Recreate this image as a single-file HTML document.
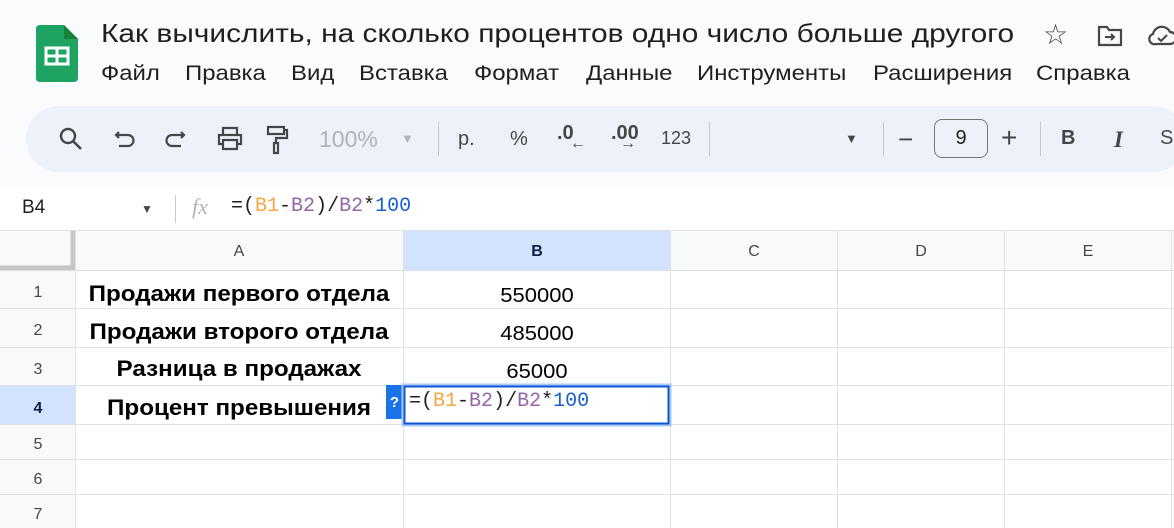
<!DOCTYPE html>
<html><head><meta charset="utf-8"><style>
*{margin:0;padding:0;box-sizing:border-box}
body{width:1174px;height:528px;overflow:hidden;background:#f9fbfd;font-family:"Liberation Sans","DejaVu Sans",sans-serif;position:relative;color:#1f1f1f}
.a{position:absolute;white-space:nowrap}
.title{left:101px;top:18px;font-size:26px;color:#1f1f1f;transform:scaleX(1.15);transform-origin:0 0}
.menu{top:62px;font-size:21px;color:#1f1f1f;transform:scaleX(1.14);transform-origin:0 0}
.tb{left:26px;top:106px;width:1160px;height:66px;background:#edf2fa;border-radius:33px}
.ic{color:#444746;font-size:20px}
.sep{width:1px;height:34px;background:#c7c7c7;top:122px}
.fb{left:0;top:188px;width:1174px;height:42px;background:#fff}
.mono{font-family:"Liberation Mono","DejaVu Sans Mono",monospace}
</style></head><body>
<svg class="a" style="left:36px;top:25px" width="42" height="57" viewBox="0 0 42 57"><path d="M4 0H28L42 14V53Q42 57 38 57H4Q0 57 0 53V4Q0 0 4 0Z" fill="#1ea362"/><path d="M28 0V14H42Z" fill="#188038"/><rect x="10" y="23" width="22" height="16" fill="none" stroke="#fff" stroke-width="3"/><line x1="10" y1="31" x2="32" y2="31" stroke="#fff" stroke-width="3"/><line x1="21" y1="23" x2="21" y2="39" stroke="#fff" stroke-width="3"/></svg>
<div class="a title">Как вычислить, на сколько процентов одно число больше другого</div>
<div class="a" style="left:1043px;top:18px;font-size:28px;color:#444746">☆</div>
<svg class="a" style="left:1097px;top:25px" width="26" height="22" viewBox="0 0 26 22"><path d="M2 2H10L12 5H24V20H2Z" fill="none" stroke="#444746" stroke-width="2.2"/><path d="M8 12H17M14 9L17 12L14 15" fill="none" stroke="#444746" stroke-width="2"/></svg>
<svg class="a" style="left:1148px;top:24px" width="30" height="24" viewBox="0 0 30 24"><path d="M8 20H22A6 6 0 0 0 22 8A9 9 0 0 0 5 10A5 5 0 0 0 8 20Z" fill="none" stroke="#444746" stroke-width="2.2"/><path d="M10 14L13 17L19 11" fill="none" stroke="#444746" stroke-width="2"/></svg>
<div class="a menu" style="left:101px">Файл</div>
<div class="a menu" style="left:185px">Правка</div>
<div class="a menu" style="left:291px">Вид</div>
<div class="a menu" style="left:359px">Вставка</div>
<div class="a menu" style="left:474px">Формат</div>
<div class="a menu" style="left:586px">Данные</div>
<div class="a menu" style="left:697px">Инструменты</div>
<div class="a menu" style="left:873px">Расширения</div>
<div class="a menu" style="left:1036px">Справка</div>
<div class="a tb"></div>
<svg class="a" style="left:58px;top:126px" width="26" height="26" viewBox="0 0 26 26"><circle cx="10" cy="10" r="7" fill="none" stroke="#444746" stroke-width="2.4"/><line x1="15" y1="15" x2="23" y2="23" stroke="#444746" stroke-width="2.6"/></svg>
<svg class="a" style="left:113px;top:128px" width="26" height="24" viewBox="0 0 26 24"><path d="M6 4L3 7L6 10M3 7H15A5 5 0 0 1 15 18H6" fill="none" stroke="#444746" stroke-width="2.2"/></svg>
<svg class="a" style="left:164px;top:128px" width="26" height="24" viewBox="0 0 26 24"><path d="M17 4L20 7L17 10M20 7H8A5 5 0 0 0 8 18H17" fill="none" stroke="#444746" stroke-width="2.2"/></svg>
<svg class="a" style="left:216px;top:126px" width="28" height="26" viewBox="0 0 28 26"><path d="M7 8V2H21V8M7 18H3V9H25V18H21M7 14H21V23H7Z" fill="none" stroke="#444746" stroke-width="2.2"/></svg>
<svg class="a" style="left:264px;top:125px" width="26" height="30" viewBox="0 0 26 30"><path d="M4 2H20V9H4ZM20 5H23V13H12V18M10 18H14V28H10Z" fill="none" stroke="#444746" stroke-width="2.2"/></svg>
<div class="a" style="left:319px;top:126px;font-size:23px;color:#b0b3b8">100%</div>
<div class="a" style="left:401px;top:131px;font-size:13px;color:#b0b3b8">▼</div>
<div class="a sep" style="left:438px"></div>
<div class="a ic" style="left:458px;top:128px">р.</div>
<div class="a ic" style="left:510px;top:128px">%</div>
<div class="a ic" style="left:557px;top:122px;font-weight:bold">.0</div>
<div class="a ic" style="left:570px;top:135px;font-size:16px">←</div>
<div class="a ic" style="left:611px;top:122px;font-weight:bold">.00</div>
<div class="a ic" style="left:620px;top:135px;font-size:16px">→</div>
<div class="a ic" style="left:661px;top:128px;font-size:18px">123</div>
<div class="a sep" style="left:709px"></div>
<div class="a" style="left:845px;top:131px;font-size:13px;color:#444746">▼</div>
<div class="a sep" style="left:883px"></div>
<div class="a ic" style="left:898px;top:124px;font-size:26px">−</div>
<div class="a" style="left:934px;top:119px;width:54px;height:39px;border:1px solid #747775;border-radius:8px;text-align:center;font-size:20px;line-height:37px;color:#1f1f1f">9</div>
<div class="a ic" style="left:1001px;top:122px;font-size:28px">+</div>
<div class="a sep" style="left:1040px"></div>
<div class="a ic" style="left:1061px;top:127px;font-weight:bold">B</div>
<div class="a ic" style="left:1114px;top:127px;font-style:italic;font-weight:bold;font-family:'Liberation Serif',serif;font-size:23px">I</div>
<div class="a ic" style="left:1160px;top:127px">S</div>
<div class="a fb"></div>
<div class="a" style="left:22px;top:197px;font-size:19px">B4</div>
<div class="a" style="left:141px;top:202px;font-size:12px;color:#444746">▼</div>
<div class="a" style="left:175px;top:195px;width:1px;height:28px;background:#c7c7c7"></div>
<div class="a" style="left:192px;top:194px;font-size:22px;font-style:italic;font-family:'Liberation Serif',serif;color:#b0b3b8">fx</div>
<div class="a mono" style="left:231px;top:195px;font-size:20px;color:#1f1f1f">=(<span style="color:#f4a742">B1</span>-<span style="color:#9565a8">B2</span>)/<span style="color:#9565a8">B2</span>*<span style="color:#1a5fd0">100</span></div>
<svg class="a" style="left:0;top:230px" width="1174" height="298">
<rect x="0" y="0" width="1174" height="298" fill="#fff"/>
<rect x="0" y="0" width="1174" height="40" fill="#f8f9fa"/>
<rect x="0" y="0" width="75" height="298" fill="#f8f9fa"/>
<rect x="403" y="0" width="267" height="40" fill="#d3e3fd"/>
<rect x="0" y="155" width="75" height="39" fill="#d3e3fd"/>
<line x1="73" y1="0" x2="73" y2="40" stroke="#c4c7c5" stroke-width="5"/>
<line x1="0" y1="38" x2="75" y2="38" stroke="#c4c7c5" stroke-width="5"/>
<g stroke="#e1e1e1" stroke-width="1">
<line x1="0" y1="0.5" x2="1174" y2="0.5"/>
<line x1="0" y1="40.5" x2="1174" y2="40.5"/>
<line x1="0" y1="78.5" x2="1174" y2="78.5"/>
<line x1="0" y1="117.5" x2="1174" y2="117.5"/>
<line x1="0" y1="155.5" x2="1174" y2="155.5"/>
<line x1="0" y1="194.5" x2="1174" y2="194.5"/>
<line x1="0" y1="229.5" x2="1174" y2="229.5"/>
<line x1="0" y1="264.5" x2="1174" y2="264.5"/>
<line x1="75.5" y1="0" x2="75.5" y2="298"/>
<line x1="403.5" y1="0" x2="403.5" y2="298"/>
<line x1="670.5" y1="0" x2="670.5" y2="298"/>
<line x1="837.5" y1="0" x2="837.5" y2="298"/>
<line x1="1004.5" y1="0" x2="1004.5" y2="298"/>
<line x1="1171.5" y1="0" x2="1171.5" y2="298"/>
</g>
<g font-family="Liberation Sans, sans-serif" font-size="16" fill="#444746" text-anchor="middle">
<text x="239" y="26">A</text><text x="537" y="26" font-weight="bold" fill="#0b1f4a">B</text><text x="754" y="26">C</text><text x="921" y="26">D</text><text x="1088" y="26">E</text>
<text x="38" y="67">1</text><text x="38" y="105">2</text><text x="38" y="144">3</text><text x="38" y="183" font-weight="bold" fill="#0b1f4a">4</text><text x="38" y="219">5</text><text x="38" y="254">6</text><text x="38" y="289">7</text>
</g>
<g font-family="Liberation Sans, sans-serif" fill="#000" text-anchor="middle">
<g font-size="22" font-weight="bold" transform="translate(239 0) scale(1.1 1)">
<text x="0" y="71">Продажи первого отдела</text>
<text x="0" y="109">Продажи второго отдела</text>
<text x="0" y="146">Разница в продажах</text>
<text x="0" y="185">Процент превышения</text>
</g>
<g font-size="20" transform="translate(537 0) scale(1.1 1)">
<text x="0" y="72">550000</text><text x="0" y="110">485000</text><text x="0" y="148">65000</text>
</g>
</g>
<rect x="386" y="155" width="17" height="34" fill="#1a73e8"/>
<text x="394.5" y="177" font-family="Liberation Sans,sans-serif" font-size="15" font-weight="bold" fill="#fff" text-anchor="middle">?</text>
<rect x="403" y="155" width="267" height="40" fill="#fff" stroke="#a8c7fa" stroke-width="3"/>
<rect x="404.5" y="156.5" width="264" height="37" fill="none" stroke="#0b57d0" stroke-width="2"/>
</svg>
<div class="a mono" style="left:409px;top:390px;font-size:20px;color:#1f1f1f">=(<span style="color:#f4a742">B1</span>-<span style="color:#9565a8">B2</span>)/<span style="color:#9565a8">B2</span>*<span style="color:#1a5fd0">100</span></div>
</body></html>
